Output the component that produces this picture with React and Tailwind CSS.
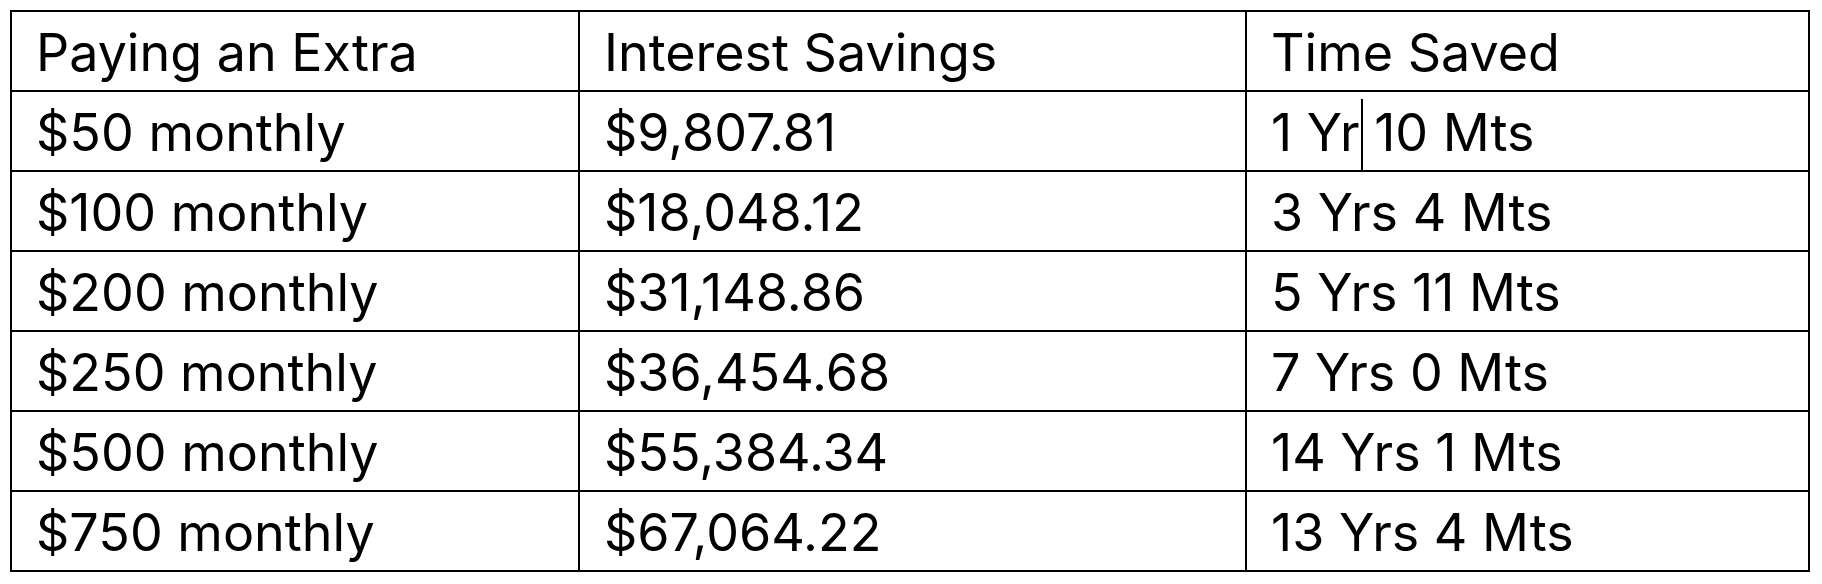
import React from "react";

const rows = [
  ["$50 monthly", "$9,807.81", "1 Yr 10 Mts"],
  ["$100 monthly", "$18,048.12", "3 Yrs 4 Mts"],
  ["$200 monthly", "$31,148.86", "5 Yrs 11 Mts"],
  ["$250 monthly", "$36,454.68", "7 Yrs 0 Mts"],
  ["$500 monthly", "$55,384.34", "14 Yrs 1 Mts"],
  ["$750 monthly", "$67,064.22", "13 Yrs 4 Mts"],
];

const cell =
  "border-2 border-black h-[80px] px-[24px] pt-[4px] align-middle text-left font-normal text-[52px] leading-none text-black whitespace-nowrap";

export default function App() {
  return (
    <div className="w-[1822px] h-[584px] bg-white pl-[10px] pt-[10px]" style={{ fontFamily: 'Inter, sans-serif' }}>
      <table className="border-collapse w-[1800px] table-fixed">
        <colgroup>
          <col className="w-[568px]" />
          <col className="w-[667px]" />
          <col />
        </colgroup>
        <thead>
          <tr>
            <th className={cell}>Paying an Extra</th>
            <th className={cell}>Interest Savings</th>
            <th className={cell}>Time Saved</th>
          </tr>
        </thead>
        <tbody>
          {rows.map((r, i) => (
            <tr key={i}>
              <td className={cell}>{r[0]}</td>
              <td className={cell}>{r[1]}</td>
              <td className={cell}>
                {i === 0 ? (
                  <>
                    <span className="relative">
                      1 Yr
                      <span className="absolute right-[-3px] top-[-2px] h-[72px] w-[2px] bg-black" />
                    </span>{" "}
                    10 Mts
                  </>
                ) : (
                  r[2]
                )}
              </td>
            </tr>
          ))}
        </tbody>
      </table>
    </div>
  );
}
